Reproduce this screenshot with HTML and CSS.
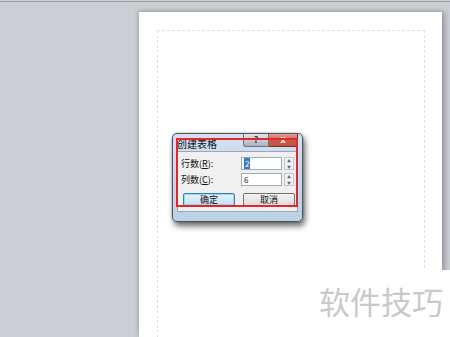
FILE: index.html
```html
<!DOCTYPE html>
<html>
<head>
<meta charset="utf-8">
<link rel="stylesheet" href="styles.css">
</head>
<body>
<div class="topline"></div>
<div class="page"><div class="margin"></div></div>

<div class="dialog">
  <div class="titlebar">
    <span class="title">创建表格</span>
    <div class="ctrls">
      <div class="btn-help">?</div>
      <div class="btn-close">x</div>
    </div>
  </div>
  <div class="body">
    <div class="row">
      <span class="label">行数(<u>R</u>):</span>
      <div class="field"><span class="sel">2</span></div>
      <div class="spin"><span>▲</span><span>▼</span></div>
    </div>
    <div class="row">
      <span class="label">列数(<u>C</u>):</span>
      <div class="field">6</div>
      <div class="spin"><span>▲</span><span>▼</span></div>
    </div>
    <div class="buttons">
      <div class="pbtn ok">确定</div>
      <div class="pbtn">取消</div>
    </div>
  </div>
</div>
<div class="redbox"></div>

<div class="wm">软件技巧</div>
</body>
</html>
```

FILE: styles.css
```css
html, body {
  margin: 0;
  padding: 0;
  width: 450px;
  height: 337px;
  overflow: hidden;
  background: #cbced3;
  font-family: "Noto Sans CJK SC", "Liberation Sans", sans-serif;
}
.topline {
  margin-top: 1px;
  height: 1px;
  background: #9b9ea3;
}
.page {
  margin: 10px 0 0 139px;
  width: 303px;
  height: 325px;
  background: #fff;
  box-sizing: border-box;
  padding: 18px 17px 0 18px;
  box-shadow: -2px -1px 4px rgba(0,0,0,0.12), 3px 0 5px rgba(0,0,0,0.25);
}
.margin {
  height: 100%;
  border-left: 1px dashed #d3e4ec;
  border-right: 1px dashed #d3e4ec;
  border-top: 1px dashed #d3e4ec;
}
.dialog {
  position: absolute;
  left: 172px;
  top: 133px;
  width: 131px;
  height: 89px;
  box-sizing: border-box;
  border: 1px solid #4e5560;
  border-radius: 5px;
  background: linear-gradient(#d2e1f1, #bcd0e6);
  box-shadow: 2px 4px 6px rgba(0,0,0,0.6), 0 0 2px rgba(0,0,0,0.35);
  display: flex;
  flex-direction: column;
  padding: 0 4px 9px 4px;
}
.titlebar {
  height: 17px;
  display: flex;
  justify-content: space-between;
  align-items: flex-start;
}
.title {
  font-size: 10px;
  line-height: 12px;
  margin-top: 4px;
  color: #111;
}
.ctrls {
  display: flex;
}
.btn-help {
  width: 24px;
  height: 12px;
  border: 1px solid #6a7583;
  border-top: none;
  border-radius: 0 0 0 3px;
  background: linear-gradient(#dde3ea, #aab5c2);
  font-size: 9px;
  line-height: 12px;
  text-align: center;
  color: #333;
  font-weight: bold;
}
.btn-close {
  width: 28px;
  height: 12px;
  border: 1px solid #6b3030;
  border-left: none;
  border-top: none;
  border-radius: 0 0 3px 0;
  background: linear-gradient(#e4a294, #c85a45 55%, #c9543f);
  font-size: 9px;
  line-height: 11px;
  text-align: center;
  color: #fff;
  font-weight: bold;
}
.body {
  flex: 1;
  background: #f0f0f0;
  border: 1px solid #9aa7b6;
  padding: 5px 2px 0 3px;
  display: flex;
  flex-direction: column;
  gap: 3px;
}
.row {
  display: flex;
  align-items: center;
  height: 13px;
}
.label {
  font-size: 9px;
  width: 60px;
  color: #111;
  line-height: 13px;
}
.label u { text-decoration: underline; }
.field {
  width: 41px;
  height: 13px;
  box-sizing: border-box;
  border: 1px solid #9eabb9;
  background: #fff;
  font-size: 8px;
  line-height: 11px;
  padding-left: 2px;
  color: #111;
}
.sel {
  background: #3b79c8;
  color: #fff;
  padding: 0 1px;
}
.spin {
  margin-left: 2px;
  width: 10px;
  height: 13px;
  display: flex;
  flex-direction: column;
  font-size: 4px;
  line-height: 6px;
  color: #667;
  text-align: center;
  border: 1px solid #c0c6ce;
  box-sizing: border-box;
  background: #f2f3f4;
}
.buttons {
  display: flex;
  gap: 8px;
  margin-top: 4px;
  padding-left: 2px;
}
.pbtn {
  width: 52px;
  height: 13px;
  box-sizing: border-box;
  border: 1px solid #707070;
  border-radius: 2px;
  background: linear-gradient(#f4f4f4, #dcdcdc);
  font-size: 9px;
  line-height: 11px;
  text-align: center;
  color: #111;
}
.pbtn.ok {
  border-color: #3c7fb1;
  background: linear-gradient(#e6f3fb, #c3e2f5);
  box-shadow: inset 0 0 0 1px #9fd4f1;
}
.redbox {
  position: absolute;
  left: 176px;
  top: 138px;
  width: 122px;
  height: 69px;
  box-sizing: border-box;
  border: 2px solid #e2262a;
}
.wm {
  position: absolute;
  left: 300px;
  top: 270px;
  width: 150px;
  height: 67px;
  background: #fff;
  box-sizing: border-box;
  padding: 11px 0 0 19px;
  font-size: 31px;
  line-height: 40px;
  color: #c9c9c9;
}
```
